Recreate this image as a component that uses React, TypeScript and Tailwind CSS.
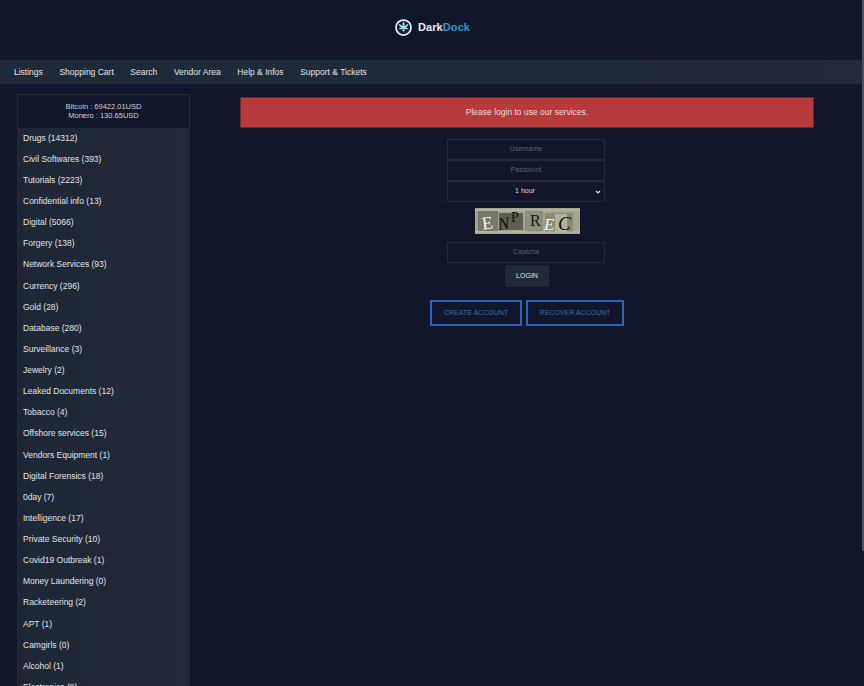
const navItems = ["Listings", "Shopping Cart", "Search", "Vendor Area", "Help & Infos", "Support & Tickets"];

const categories = [
  "Drugs (14312)",
  "Civil Softwares (393)",
  "Tutorials (2223)",
  "Confidential info (13)",
  "Digital (5066)",
  "Forgery (138)",
  "Network Services (93)",
  "Currency (296)",
  "Gold (28)",
  "Database (280)",
  "Surveillance (3)",
  "Jewelry (2)",
  "Leaked Documents (12)",
  "Tobacco (4)",
  "Offshore services (15)",
  "Vendors Equipment (1)",
  "Digital Forensics (18)",
  "0day (7)",
  "Intelligence (17)",
  "Private Security (10)",
  "Covid19 Outbreak (1)",
  "Money Laundering (0)",
  "Racketeering (2)",
  "APT (1)",
  "Camgirls (0)",
  "Alcohol (1)",
  "Electronics (9)",
];

function Logo() {
  return (
    <svg width="17" height="17" viewBox="0 0 34 34" aria-hidden="true">
      <circle cx="17" cy="17" r="15" fill="#10203a" stroke="#e8eef2" strokeWidth="3.500" />
      <path d="M17 5c-2 3-2.500 6-1.500 9.500C13 12 10.500 10.500 7.500 10c.5 3.500 2.500 6 5.500 7.500-2 0-4 .5-5.500 2 3 1.500 6 1.500 8.500 0 0 2-1 3.500-2 5h6c-1-1.500-2-3-2-5 2.500 1.500 5.500 1.500 8.500 0-1.500-1.500-3.500-2-5.500-2 3-1.500 5-4 5.500-7.500-3 .5-5.500 2-8 4.500C19.500 11 19 8 17 5z" fill="#a8dcec" />
    </svg>
  );
}

function Captcha() {
  return (
    <svg width="105" height="26" viewBox="0 0 105 26" className="block">
      <rect width="105" height="26" fill="#a5a58f" />
      <rect x="3" y="3" width="20" height="20" fill="#77786a" />
      <rect x="24" y="5" width="24" height="17" fill="#5f6055" />
      <rect x="50" y="2" width="18" height="22" fill="#8d8e7c" />
      <rect x="70" y="5" width="28" height="19" fill="#8b8c78" />
      <rect x="80" y="6" width="12" height="18" fill="#b2b2a0" />
      <path d="M0 24h105M0 2h105" stroke="#cfcfbd" strokeWidth="1" opacity="0.7" />
      <g fontFamily="'Liberation Serif', serif">
        <text x="7" y="21" fontSize="18" fill="#f4f4ea" transform="rotate(-8 12 16)">E</text>
        <text x="23" y="21" fontSize="17" fontStyle="italic" fill="#0f0f0a" transform="rotate(-8 30 16)">N</text>
        <text x="36" y="14" fontSize="14" fill="#0f0f0a">P</text>
        <text x="55" y="18" fontSize="16" fill="#1a1a14">R</text>
        <text x="69" y="22" fontSize="17" fontStyle="italic" fill="#f7f7ec">E</text>
        <text x="83" y="22" fontSize="19" fontStyle="italic" fill="#0f0f0a">C</text>
      </g>
    </svg>
  );
}

function Field({ placeholder }: { placeholder: string }) {
  return (
    <input
      placeholder={placeholder}
      className="block h-[21px] w-full border border-[#242a3c] bg-[#11162a] pb-[2px] text-center text-[7px] text-white outline-none placeholder:text-[#5b6170]"
    />
  );
}

export default function App() {
  return (
    <div className="relative h-[686px] overflow-hidden bg-[#11162a] font-['Liberation_Sans',Arial,sans-serif] text-[#e4e6ea]">
      <header className="flex h-[60px] items-center justify-center gap-[6px] pb-[6px] pl-[1px]">
        <Logo />
        <span className="text-[11px] font-bold tracking-[0.1px] text-[#e8eef2]">
          Dark<span className="text-[#2496d6]">Dock</span>
        </span>
      </header>

      <nav className="flex h-[24px] items-center gap-[16.600px] bg-gradient-to-r from-[#1e2a38] to-[#232a3a] pl-[14px] text-[8.500px] text-[#e0e3e7]">
        {navItems.map((item) => (
          <a key={item}>{item}</a>
        ))}
      </nav>

      <main className="flex items-start">
        <aside className="ml-[17px] mt-[10px] w-[173px] shrink-0 border border-[#232b3b] bg-gradient-to-r from-[#1d2735] to-[#242a3b]">
          <div className="flex h-[33px] flex-col justify-center bg-[#11162a] pb-[2px] text-center text-[7.500px] leading-[9px] text-[#cfd2d8]">
            <div>Bitcoin : 69422.01USD</div>
            <div>Monero : 130.65USD</div>
          </div>
          {categories.map((name) => (
            <div key={name} className="flex h-[21.140px] items-center pb-[1px] pl-[5px] text-[8.500px] text-[#e0e3e7]">
              {name}
            </div>
          ))}
        </aside>

        <section className="ml-[50px] mt-[13px] flex w-[574px] flex-col items-center">
          <div className="flex h-[31px] w-full items-center justify-center border border-[#7a2226] bg-[#b73a3d] text-[8.500px] text-[#f0d8d8]">
            Please login to use our services.
          </div>

          <form className="mt-[11px] flex flex-col items-center">
            <div className="mr-[2px] flex w-[158px] flex-col">
              <Field placeholder="Username" />
              <Field placeholder="Password" />
              <div className="relative flex h-[21px] items-center justify-center border border-[#242a3c] pr-[2px] text-[7px] text-[#d4d7dc]">
                1 hour
                <svg className="absolute right-[3px] top-[7px]" width="6" height="6" viewBox="0 0 6 6" fill="none" stroke="#d4d7dc" strokeWidth="1.200">
                  <path d="M1 2l2 2 2-2" />
                </svg>
              </div>
            </div>
            <div className="mt-[6px]">
              <Captcha />
            </div>
            <div className="mr-[2px] mt-[8px] w-[158px]">
              <Field placeholder="Captcha" />
            </div>
            <button type="button" className="mt-[2px] h-[22px] w-[44px] rounded-[2px] bg-[#212838] text-[7px] text-[#e0e3e8]">
              LOGIN
            </button>
            <div className="mt-[13px] flex gap-[4px]">
              <a className="flex h-[26px] w-[92px] items-center justify-center border-2 border-[#2f62b8] text-[7px] text-[#3d6aa8]">
                CREATE ACCOUNT
              </a>
              <a className="flex h-[26px] w-[98px] items-center justify-center border-2 border-[#2f62b8] text-[7px] text-[#3d6aa8]">
                RECOVER ACCOUNT
              </a>
            </div>
          </form>
        </section>
      </main>

      {/* scrollbar thumb */}
      <div className="absolute right-0 top-0 h-[551px] w-[2.500px] bg-[#4a5163]" />
    </div>
  );
}
